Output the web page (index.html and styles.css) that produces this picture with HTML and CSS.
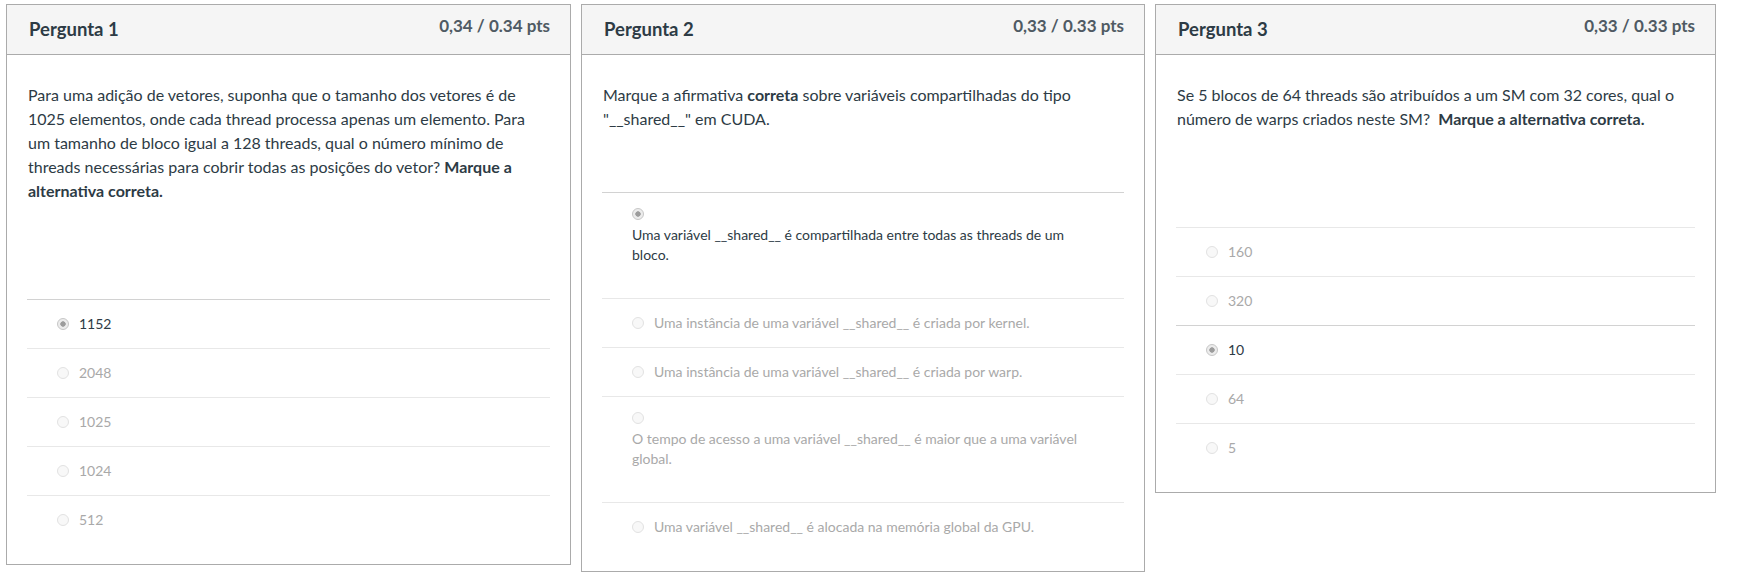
FILE: index.html
```html
<!DOCTYPE html>
<html lang="pt">
<head>
<meta charset="utf-8">
<title>Perguntas</title>
<link rel="stylesheet" href="styles.css">
</head>
<body>
<div class="quiz">
  <section class="card">
    <header class="card-header">
      <h2 class="card-title">Pergunta 1</h2>
      <span class="card-points">0,34 / 0.34 pts</span>
    </header>
    <div class="card-body">
      <p class="question question--tall">Para uma adição de vetores, suponha que o tamanho dos vetores é de 1025 elementos, onde cada thread processa apenas um elemento. Para um tamanho de bloco igual a 128 threads, qual o número mínimo de threads necessárias para cobrir todas as posições do vetor? <strong>Marque a alternativa correta.</strong></p>
      <ul class="answers">
        <li class="answer answer--selected"><span class="radio radio--checked"></span><span class="answer-text">1152</span></li>
        <li class="answer"><span class="radio"></span><span class="answer-text">2048</span></li>
        <li class="answer"><span class="radio"></span><span class="answer-text">1025</span></li>
        <li class="answer"><span class="radio"></span><span class="answer-text">1024</span></li>
        <li class="answer"><span class="radio"></span><span class="answer-text">512</span></li>
      </ul>
    </div>
  </section>

  <section class="card">
    <header class="card-header">
      <h2 class="card-title">Pergunta 2</h2>
      <span class="card-points">0,33 / 0.33 pts</span>
    </header>
    <div class="card-body">
      <p class="question">Marque a afirmativa <strong>correta</strong> sobre variáveis compartilhadas do tipo "__shared__" em CUDA.</p>
      <ul class="answers">
        <li class="answer answer--selected answer--stacked"><span class="radio radio--checked"></span><span class="answer-text">Uma variável __shared__ é compartilhada entre todas as threads de um bloco.</span></li>
        <li class="answer"><span class="radio"></span><span class="answer-text">Uma instância de uma variável __shared__ é criada por kernel.</span></li>
        <li class="answer"><span class="radio"></span><span class="answer-text">Uma instância de uma variável __shared__ é criada por warp.</span></li>
        <li class="answer answer--stacked"><span class="radio"></span><span class="answer-text">O tempo de acesso a uma variável __shared__ é maior que a uma variável global.</span></li>
        <li class="answer"><span class="radio"></span><span class="answer-text">Uma variável __shared__ é alocada na memória global da GPU.</span></li>
      </ul>
    </div>
  </section>

  <section class="card">
    <header class="card-header">
      <h2 class="card-title">Pergunta 3</h2>
      <span class="card-points">0,33 / 0.33 pts</span>
    </header>
    <div class="card-body">
      <p class="question question--tall">Se 5 blocos de 64 threads são atribuídos a um SM com 32 cores, qual o número de warps criados neste SM?&nbsp; <strong>Marque a alternativa correta.</strong></p>
      <ul class="answers">
        <li class="answer"><span class="radio"></span><span class="answer-text">160</span></li>
        <li class="answer"><span class="radio"></span><span class="answer-text">320</span></li>
        <li class="answer answer--selected"><span class="radio radio--checked"></span><span class="answer-text">10</span></li>
        <li class="answer"><span class="radio"></span><span class="answer-text">64</span></li>
        <li class="answer"><span class="radio"></span><span class="answer-text">5</span></li>
      </ul>
    </div>
  </section>
</div>
</body>
</html>
```

FILE: styles.css
```css
* { box-sizing: border-box; }

body {
  margin: 0;
  background: #fff;
  font-family: Lato, "Noto Sans", "Liberation Sans", sans-serif;
  color: #2d3b45;
}

.quiz {
  display: grid;
  grid-template-columns: 565px 564px 561px;
  column-gap: 10px;
  align-items: start;
  padding: 4px 0 0 6px;
}

.card {
  border: 1px solid #ababab;
  background: #fff;
}

.card-header {
  display: flex;
  justify-content: space-between;
  align-items: flex-start;
  height: 50px;
  padding: 0 20px 0 22px;
  background: #f5f5f5;
  border-bottom: 1px solid #ababab;
}

.card-title {
  margin: 12px 0 0;
  font-size: 18.5px;
  line-height: 24px;
  font-weight: 700;
  color: #2d3b45;
}

.card-points {
  margin-top: 9px;
  font-size: 17px;
  line-height: 24px;
  font-weight: 700;
  color: #4f5a63;
}

.card-body {
  padding: 28px 20px 20px;
}

.question {
  margin: 0 4px 61px 1px;
  font-size: 16px;
  line-height: 24px;
  color: #2d3b45;
}

.question strong { font-weight: 700; }

.question--tall { margin-bottom: 96px; }

.answers {
  list-style: none;
  margin: 0;
  padding: 0;
}

.answer {
  display: flex;
  align-items: center;
  gap: 10px;
  padding: 14px 30px;
  border-top: 1px solid #e8e8e8;
  font-size: 14px;
  line-height: 20px;
  color: #a9a9a9;
}

.answer--selected {
  border-top-color: #d2d2d2;
  color: #2d3b45;
}

.answer--stacked {
  display: block;
  padding-bottom: 33px;
}

.answer--stacked .radio {
  display: block;
  margin: 1px 0 5px;
}

.answer--stacked .answer-text {
  display: block;
}

.radio {
  flex: none;
  width: 12px;
  height: 12px;
  border-radius: 50%;
  border: 1px solid #e2e2e2;
  background: #f8f8f8;
}

.radio--checked {
  border-color: #c6c6c6;
  background: radial-gradient(circle, #9c9c9c 0 2.4px, #ececec 3px);
}
```
